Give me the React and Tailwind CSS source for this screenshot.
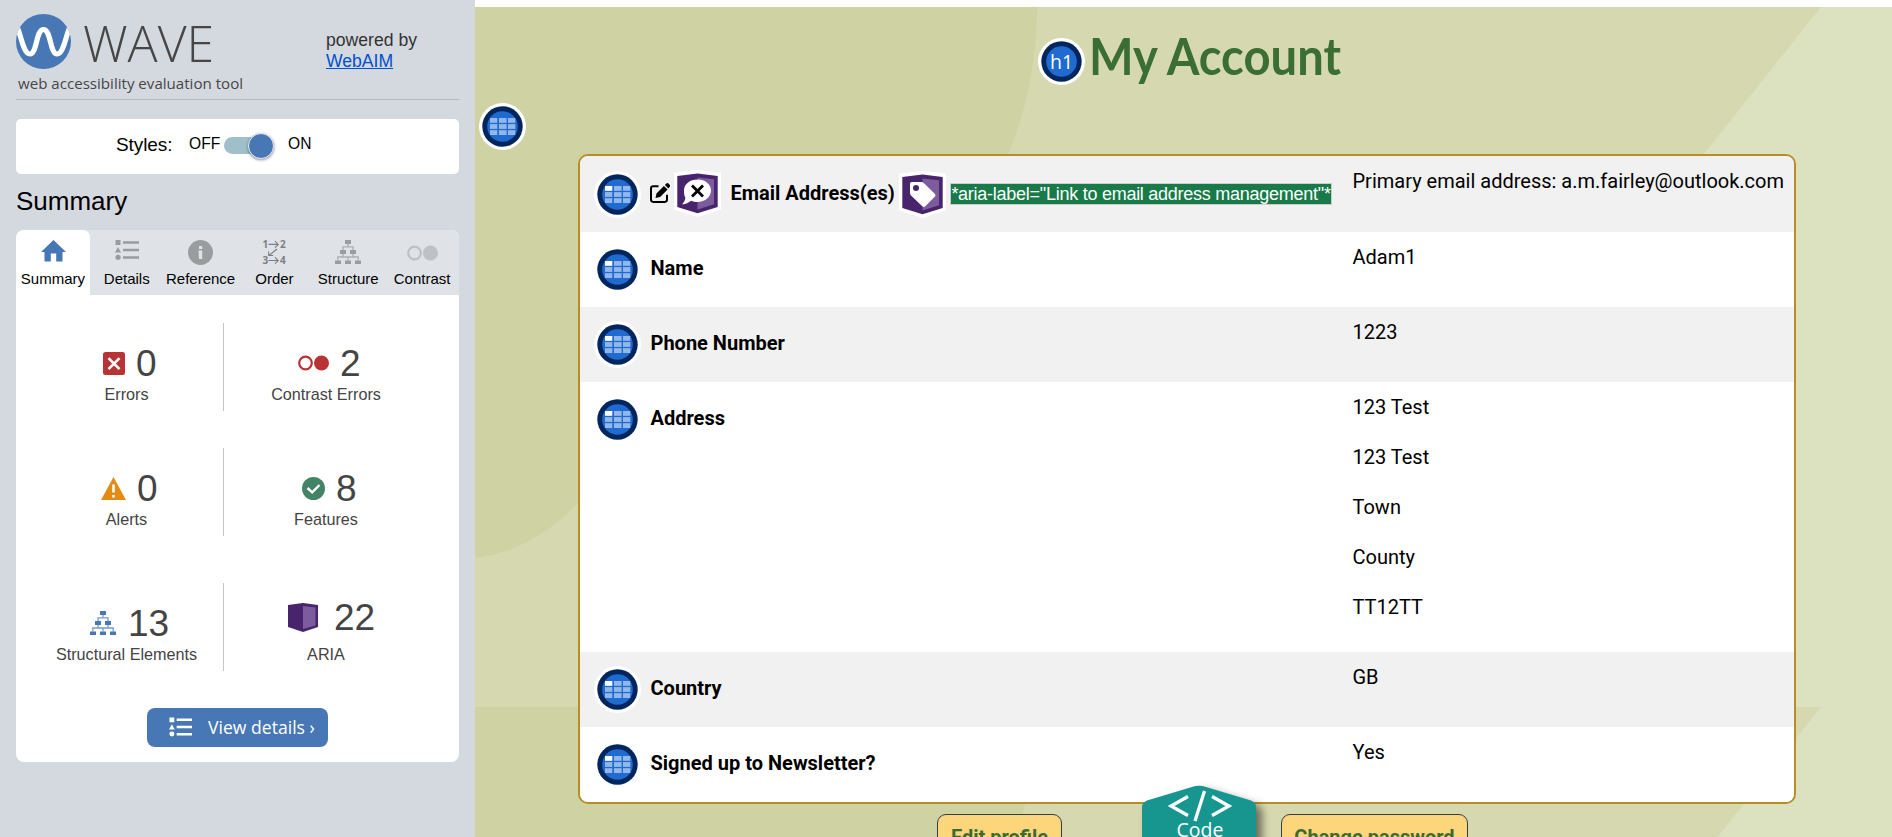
import React from 'react';

const ARIAL = "font-['Liberation_Sans',Arial,sans-serif]";

function WaveLogo() {
  return (
    <svg className="block h-[55px] w-[55px]" viewBox="0 0 55 55">
      <defs>
        <clipPath id="disc"><circle cx="27.5" cy="27.5" r="27.5" /></clipPath>
      </defs>
      <circle cx="27.5" cy="27.5" r="27.5" fill="#4877b6" />
      <path clipPath="url(#disc)" d="M1 13 C5 20 7 40 14 40 C21 40 20 15.5 27.5 15.5 C35 15.5 34 40 41 40 C48 40 50 20 54 13" fill="none" stroke="#fff" strokeWidth="5.2" />
    </svg>
  );
}

function ListIcon({ className }) {
  return (
    <svg className={className} viewBox="0 0 24 20" fill="currentColor">
      <path d="M.5 0h5v5h-5zM3 7l3 5.600H0z" />
      <circle cx="3" cy="17.300" r="2.600" />
      <path d="M8 1.200h16v2.600H8zM8 8.700h16v2.600H8zM8 16.200h16v2.600H8z" />
    </svg>
  );
}

function TreeIcon({ className }) {
  return (
    <svg className={className} viewBox="0 0 26 24" fill="currentColor">
      <path d="M10 0h6v4h-6zM5 10h6v4H5zM15 10h6v4h-6zM0 20.500h6V24H0zM10 20.500h6V24h-6zM20 20.500h6V24h-6z" />
      <path fill="none" stroke="currentColor" strokeWidth="1.300" opacity=".75" d="M13 4v3M8 10V6.800h10V10M8 14v3M18 14v3M2.800 20.500V17h20.400v3.500M13 17v3.500" />
    </svg>
  );
}

function TwoDots({ className }) {
  return (
    <svg className={className} viewBox="0 0 31 16">
      <circle cx="7.500" cy="8" r="6.300" fill="none" stroke="currentColor" strokeWidth="2.200" />
      <circle cx="23.500" cy="8" r="7.500" fill="currentColor" />
    </svg>
  );
}

function HomeIcon() {
  return (
    <svg className="ml-[2px] h-[22px] w-[25px] -translate-y-[2px] text-[#4877b6]" viewBox="0 0 25 22" fill="currentColor">
      <path d="M12.500 0 25 12h-3.500v9.500h-6.300v-8h-5.400v8H3.500V12H0z" />
    </svg>
  );
}

function InfoIcon() {
  return (
    <svg className="h-[25px] w-[25px]" viewBox="0 0 25 25">
      <circle cx="12.500" cy="12.500" r="12.500" fill="#9a9d9f" />
      <path d="M11 6h3.200v3H11zM10.500 10.500h3.700V19H11z" fill="#dfe3e8" />
    </svg>
  );
}

function OrderIcon() {
  return (
    <svg className="h-[25px] w-[24px] overflow-visible" viewBox="0 0 24 25" fill="#7d8083">
      <g fontFamily="Open Sans, sans-serif" fontWeight="700" fontSize="10">
        <text x="0.500" y="8">1</text>
        <text x="18" y="8">2</text>
        <text x="0.500" y="24">3</text>
        <text x="18" y="24">4</text>
      </g>
      <path d="M6.500 4.400h9.500M13 1.200l3.200 3.200-3.200 3.200M6.500 20.500h9.500M13 17.300l3.200 3.200-3.200 3.200M15 9 7 15.500M6.700 11.500v4h4.500" fill="none" stroke="#7d8083" strokeWidth="1.100" />
    </svg>
  );
}

const tabs = [
  { label: 'Summary', icon: <HomeIcon />, active: true },
  { label: 'Details', icon: <ListIcon className="h-[20px] w-[24px] text-[#9a9d9f] -translate-y-[3px]" /> },
  { label: 'Reference', icon: <InfoIcon /> },
  { label: 'Order', icon: <OrderIcon /> },
  { label: 'Structure', icon: <TreeIcon className="h-[24px] w-[26px] text-[#9a9d9f] -translate-y-px" /> },
  { label: 'Contrast', icon: <TwoDots className="h-[16px] w-[31px] text-[#bdc0c5]" /> },
];

function ErrorIcon() {
  return (
    <svg className="h-[23px] w-[22px]" viewBox="0 0 22 23">
      <rect width="22" height="23" rx="2.500" fill="#b83335" />
      <path d="m5.500 6.200 11 11m0-11-11 11" stroke="#fff" strokeWidth="2.600" />
    </svg>
  );
}

function AlertIcon() {
  return (
    <svg className="h-[23px] w-[25px]" viewBox="0 0 25 23">
      <path d="M12.500 0 25 23H0z" fill="#e28c17" />
      <path d="M11.200 7.500h2.600v8h-2.600zM11.200 18h2.600v2.600h-2.600z" fill="#fff" />
    </svg>
  );
}

function CheckIcon() {
  return (
    <svg className="h-[23px] w-[23px]" viewBox="0 0 23 23">
      <circle cx="11.500" cy="11.500" r="11.500" fill="#448466" />
      <path d="m5.500 11 4.700 4.300 7.300-7.300" fill="none" stroke="#fff" strokeWidth="2.400" />
    </svg>
  );
}

function AriaBox() {
  return (
    <svg className="h-[29px] w-[30px]" viewBox="0 0 30 29">
      <path d="M0 2 15 0l15 2v22L15 29 0 24z" fill="#48246c" />
      <path d="m15 3 12.500 1.500v18L15 26z" fill="#7d5c9e" />
    </svg>
  );
}

function Stat({ icon, value, label, className, gap }) {
  return (
    <div className="flex flex-1 flex-col">
      <div className={'flex h-[42px] items-center text-[37px] leading-[42px] ' + className + ' ' + gap}>
        {icon}
        <span className="pt-[1px]">{value}</span>
      </div>
      <p className="text-center text-[16.200px] leading-[20px]">{label}</p>
    </div>
  );
}

function StatRow({ left, right }) {
  return (
    <div className="flex h-[88px] pl-[14px]">
      <div className="flex w-[194px] border-r border-[#c6c6c6] pt-[19px]">{left}</div>
      <div className="flex w-[204px] pt-[19px]">{right}</div>
    </div>
  );
}

function Sidebar() {
  return (
    <aside className={'h-[837px] w-[475px] shrink-0 bg-[#d4d9e0] px-[16px] text-black ' + ARIAL}>
      <header className="flex h-[100px] border-b border-[#b2b9b8]">
        <div className="w-[310px] pt-[14px]">
          <div className="flex h-[55px]">
            <WaveLogo />
            <span className="ml-[12px] mt-[-5px] font-['Open_Sans',sans-serif] text-[50px] leading-[68px] font-light text-[#464646]">WAVE</span>
          </div>
          <p className="mt-[4px] ml-[2px] whitespace-nowrap font-['Open_Sans',sans-serif] text-[15.100px] leading-[20px] text-[#464646]">web accessibility evaluation tool</p>
        </div>
        <p className="pt-[30px] text-[17.600px] leading-[21px] text-[#333]">
          powered by
          <br />
          <a className="text-[#0050d0] underline">WebAIM</a>
        </p>
      </header>

      <section className="mt-[19px] flex h-[55px] items-center rounded-[5px] bg-white pl-[100px] text-[16px]">
        <span className="w-[58px] pb-[3px] text-[19px] tracking-[-0.100px]">Styles:</span>
        <span className="ml-[15px] w-[35px] pb-[6px] text-[15.600px]">OFF</span>
        <span className="flex h-[17px] w-[50px] items-center justify-end rounded-full bg-[#9fc0ca] -translate-y-[1px]">
          <span className="h-[26px] w-[26px] shrink-0 rounded-full border border-[#e8eef5] bg-[#4877b6] shadow-[0_1px_3px_rgba(0,0,0,0.45)]" />
        </span>
        <span className="ml-[14px] pb-[6px] text-[15.600px]">ON</span>
      </section>

      <h2 className="mt-[12px] h-[44px] text-[26px] leading-[30px]">Summary</h2>

      <section className="h-[532px] overflow-hidden rounded-[8px] bg-white">
        <nav className="flex h-[65px] bg-[#dfe3e8]">
          {tabs.map((t) => (
            <div key={t.label} className={'flex w-[73.830px] flex-col items-center ' + (t.active ? 'rounded-t-[7px] bg-white' : '')}>
              <div className="mt-[9px] flex h-[27px] items-center">{t.icon}</div>
              <span className="mt-[4px] text-[15px] leading-[18px]">{t.label}</span>
            </div>
          ))}
        </nav>
        <div className="pt-[28px] text-[#444]">
          <StatRow
            left={<Stat icon={<ErrorIcon />} value="0" label="Errors" className="pl-[73px]" gap="gap-[11px]" />}
            right={<Stat icon={<TwoDots className="h-[16px] w-[31px] text-[#b83335]" />} value="2" label="Contrast Errors" className="pl-[74px]" gap="gap-[11px]" />}
          />
          <div className="h-[37px]" />
          <StatRow
            left={<Stat icon={<AlertIcon />} value="0" label="Alerts" className="pl-[71px]" gap="gap-[11px]" />}
            right={<Stat icon={<CheckIcon />} value="8" label="Features" className="pl-[78px]" gap="gap-[11px]" />}
          />
          <div className="h-[47px]" />
          <StatRow
            left={<Stat icon={<TreeIcon className="h-[24px] w-[26px] text-[#4877b6]" />} value="13" label="Structural Elements" className="pl-[60px]" gap="gap-[12px]" />}
            right={<Stat icon={<AriaBox />} value="22" label="ARIA" className="mt-[-6px] mb-[6px] pl-[64px]" gap="gap-[16px]" />}
          />
        </div>
        <button className="mt-[37px] ml-[131px] flex h-[39px] w-[181px] items-center rounded-[8px] bg-[#4877b6] pl-[22px] text-white">
          <ListIcon className="h-[20px] w-[23px] -translate-y-px" />
          <span className="ml-[16px] whitespace-nowrap pb-[1px] font-['Open_Sans',sans-serif] text-[17.600px] leading-[24px]">View details ›</span>
        </button>
      </section>
    </aside>
  );
}

function Badge({ children }) {
  return (
    <svg className="block h-[47px] w-[47px] shrink-0" viewBox="0 0 47 47">
      <circle cx="23.500" cy="23.500" r="23.500" fill="#fff" />
      <circle cx="23.500" cy="23.500" r="20.200" fill="#00265d" />
      <circle cx="23.500" cy="23.500" r="15.300" fill="#1f6bd0" />
      {children}
    </svg>
  );
}

function TableBadge({ header }) {
  const cells = [];
  for (let r = 0; r < 3; r++) {
    for (let c = 0; c < 3; c++) {
      cells.push(
        <rect key={r + '-' + c} x={11 + c * 9} y={15 + r * 6.100} width={c === 1 ? 7.600 : 7.300} height="4.800" fill={header && r === 0 && c === 0 ? '#fff' : '#93b7e8'} />
      );
    }
  }
  return <Badge>{cells}</Badge>;
}

function AriaBadge({ children }) {
  return (
    <svg className="block h-[47px] w-[47px] shrink-0" viewBox="0 0 47 47">
      <path d="M0 2.800 23.500 0 47 2.800V39.500L23.500 47 0 39.500z" fill="#fff" />
      <path d="M3.300 6 23.500 3.500 43.700 6v31L23.500 43.300 3.300 37z" fill="#48246c" />
      <path d="M23.500 7.500 40 9.200v25L23.500 39.500z" fill="#7d5c9e" />
      {children}
    </svg>
  );
}

function EditIcon() {
  return (
    <svg className="block h-[20px] w-[20px] shrink-0 -translate-y-px" viewBox="0 0 20 20">
      <path d="M8.500 3.300H3.300A2.300 2.300 0 0 0 1 5.600v11A2.300 2.300 0 0 0 3.300 18.900h11.400a2.300 2.300 0 0 0 2.300-2.300v-4.800" fill="none" stroke="#000" strokeWidth="2" />
      <path d="M5.500 15l1-4.600 7.400-7.400 3.700 3.600-7.500 7.400zM14.900 2l1.400-1.400a1.600 1.600 0 0 1 2.200 0l1.100 1.100a1.600 1.600 0 0 1 0 2.200L18.400 5.500z" fill="#000" />
    </svg>
  );
}

function Row({ height, cell = 'h-[75px]', label, values, shaded }) {
  return (
    <div className={'flex ' + height + ' ' + (shaded ? 'bg-[#f1f1f1]' : 'bg-white')}>
      <div className={'flex w-[772.500px] shrink-0 items-center pl-[14px] ' + cell}>
        <TableBadge header />
        {label}
      </div>
      <div className="flex flex-col gap-[20px] pt-[10px] text-[20px] leading-[30px] whitespace-nowrap">
        {values.map((v, i) => <p key={i}>{v}</p>)}
      </div>
    </div>
  );
}

function Label({ children }) {
  return <b className="ml-[9.500px] pb-[3px] text-[20px] leading-[30px] font-bold">{children}</b>;
}

function Backdrop() {
  return (
    <svg className="absolute top-[7px] left-0 h-[830px] w-[1417px]" viewBox="475 0 1417 830">
      <defs>
        <g id="tile">
          <rect x="475" width="1417" height="700" fill="#d6d9b0" />
          <path d="M475 0H1037.500C1036 50 1029 97 1010 143C940 320 720 350 577.500 497Q530 545 475 551Z" fill="#cfd3a4" />
          <path d="M1892 0H1821L1704 147L1500 420V700H1892Z" fill="#dce1c0" />
        </g>
      </defs>
      <use href="#tile" />
      <use href="#tile" y="700" />
    </svg>
  );
}

function CodeTab() {
  return (
    <div className="absolute top-[786px] left-[667px] h-[51px] w-[135px]">
      <svg className="h-[51px] w-[135px] overflow-visible" viewBox="0 0 135 51">
        <path d="M0 70V21Q0 16.500 5 14.500L50 1Q57 -1.500 64 1L109 14.500Q114 16.500 114 21V70Z" fill="#179690" style={{ filter: 'drop-shadow(6px 5px 4px rgba(0,0,0,.5))' }} />
        <path d="m46 10.500-17 9.500 17 9.500M70 10.500 87 20 70 29.500M62.500 5 53 35" fill="none" stroke="#fff" strokeWidth="3.300" />
        <text x="58" y="51" textAnchor="middle" fontFamily="Open Sans, sans-serif" fontSize="19.500" fill="#fff">Code</text>
      </svg>
    </div>
  );
}

export default function App() {
  return (
    <div className="flex h-[837px] w-[1892px] overflow-hidden bg-white">
      <Sidebar />
      <main className="relative h-[837px] w-[1417px] overflow-hidden font-['Roboto',sans-serif] text-black">
        <Backdrop />
        <div className="relative flex h-[837px] flex-col">
          <header className="flex h-[103px] shrink-0 pl-[563px]">
            <div className="mt-[38px]">
              <Badge>
                <text x="23.500" y="31" textAnchor="middle" fontFamily="Open Sans, sans-serif" fontSize="19.500" fill="#fff">h1</text>
              </Badge>
            </div>
            <h1 className="mt-[24px] ml-[4px] origin-left scale-x-[0.925] whitespace-nowrap font-['Lato',sans-serif] text-[51px] leading-[64px] font-bold text-[#3a6e33]">My Account</h1>
          </header>
          <div className="h-[51px] shrink-0 pl-[4px]"><TableBadge /></div>

          <section className="ml-[103px] h-[650px] w-[1218px] shrink-0 overflow-hidden rounded-[10px] border-2 border-[#b98d26]">
            <Row
              shaded
              height="h-[76px]"
              cell="h-[76px]"
              label={
                <>
                  <span className="ml-[9px]"><EditIcon /></span>
                  <span className="ml-[4px] -translate-y-px">
                    <AriaBadge>
                      <path d="M23.500 9.500c7.700 0 13.500 4.700 13.500 11s-5.800 11.500-13.500 11.500c-2.300 0-4.500-.5-6.400-1.300-2.200 1.800-5.500 3.300-9 3.800 1.500-1.700 3-4 3.300-6.700C10 25.700 10 23 10 20.500c0-6.300 5.800-11 13.500-11z" fill="#fff" />
                      <path d="m18 15.500 11 11m0-11-11 11" stroke="#000" strokeWidth="2.800" />
                    </AriaBadge>
                  </span>
                  <b className="ml-[9.500px] pb-[3px] text-[20px] leading-[30px] font-bold whitespace-nowrap">Email Address(es)</b>
                  <span className="ml-[4px]">
                    <AriaBadge>
                      <path d="M13 11h9c1.200 0 2 .4 3 1.300L35.500 22.500c1.300 1.300 1.300 2.300 0 3.500l-9 9c-1.200 1.200-2.200 1.200-3.500 0L12 24.500c-.7-.7-1-1.500-1-2.500v-9c0-1.300.7-2 2-2z" fill="#fff" />
                      <circle cx="17" cy="17" r="3" fill="#48246c" />
                    </AriaBadge>
                  </span>
                  <span className={'ml-[4.500px] border border-[#ccc] bg-[#177a48] text-[18px] leading-[20px] tracking-[-0.260px] whitespace-nowrap text-white ' + ARIAL}>
                    *aria-label="Link to email address management"*
                  </span>
                </>
              }
              values={['Primary email address: a.m.fairley@outlook.com']}
            />
            <Row height="h-[75px]" label={<Label>Name</Label>} values={['Adam1']} />
            <Row shaded height="h-[75px]" label={<Label>Phone Number</Label>} values={['1223']} />
            <Row height="h-[270px]" label={<Label>Address</Label>} values={['123 Test', '123 Test', 'Town', 'County', 'TT12TT']} />
            <Row shaded height="h-[75px]" label={<Label>Country</Label>} values={['GB']} />
            <Row height="h-[75px]" label={<Label>Signed up to Newsletter?</Label>} values={['Yes']} />
          </section>

          <div className="mt-[10px] flex h-[46px] shrink-0 gap-[219px] pl-[462px] text-[20px] font-bold text-[#3a6b35]">
            <button className="h-[46px] w-[125px] rounded-[9px] border border-[#333f48] bg-[#fdd57a] whitespace-nowrap">Edit profile</button>
            <button className="h-[46px] w-[187px] rounded-[9px] border border-[#333f48] bg-[#fdd57a] whitespace-nowrap">Change password</button>
          </div>
        </div>
        <CodeTab />
      </main>
    </div>
  );
}
